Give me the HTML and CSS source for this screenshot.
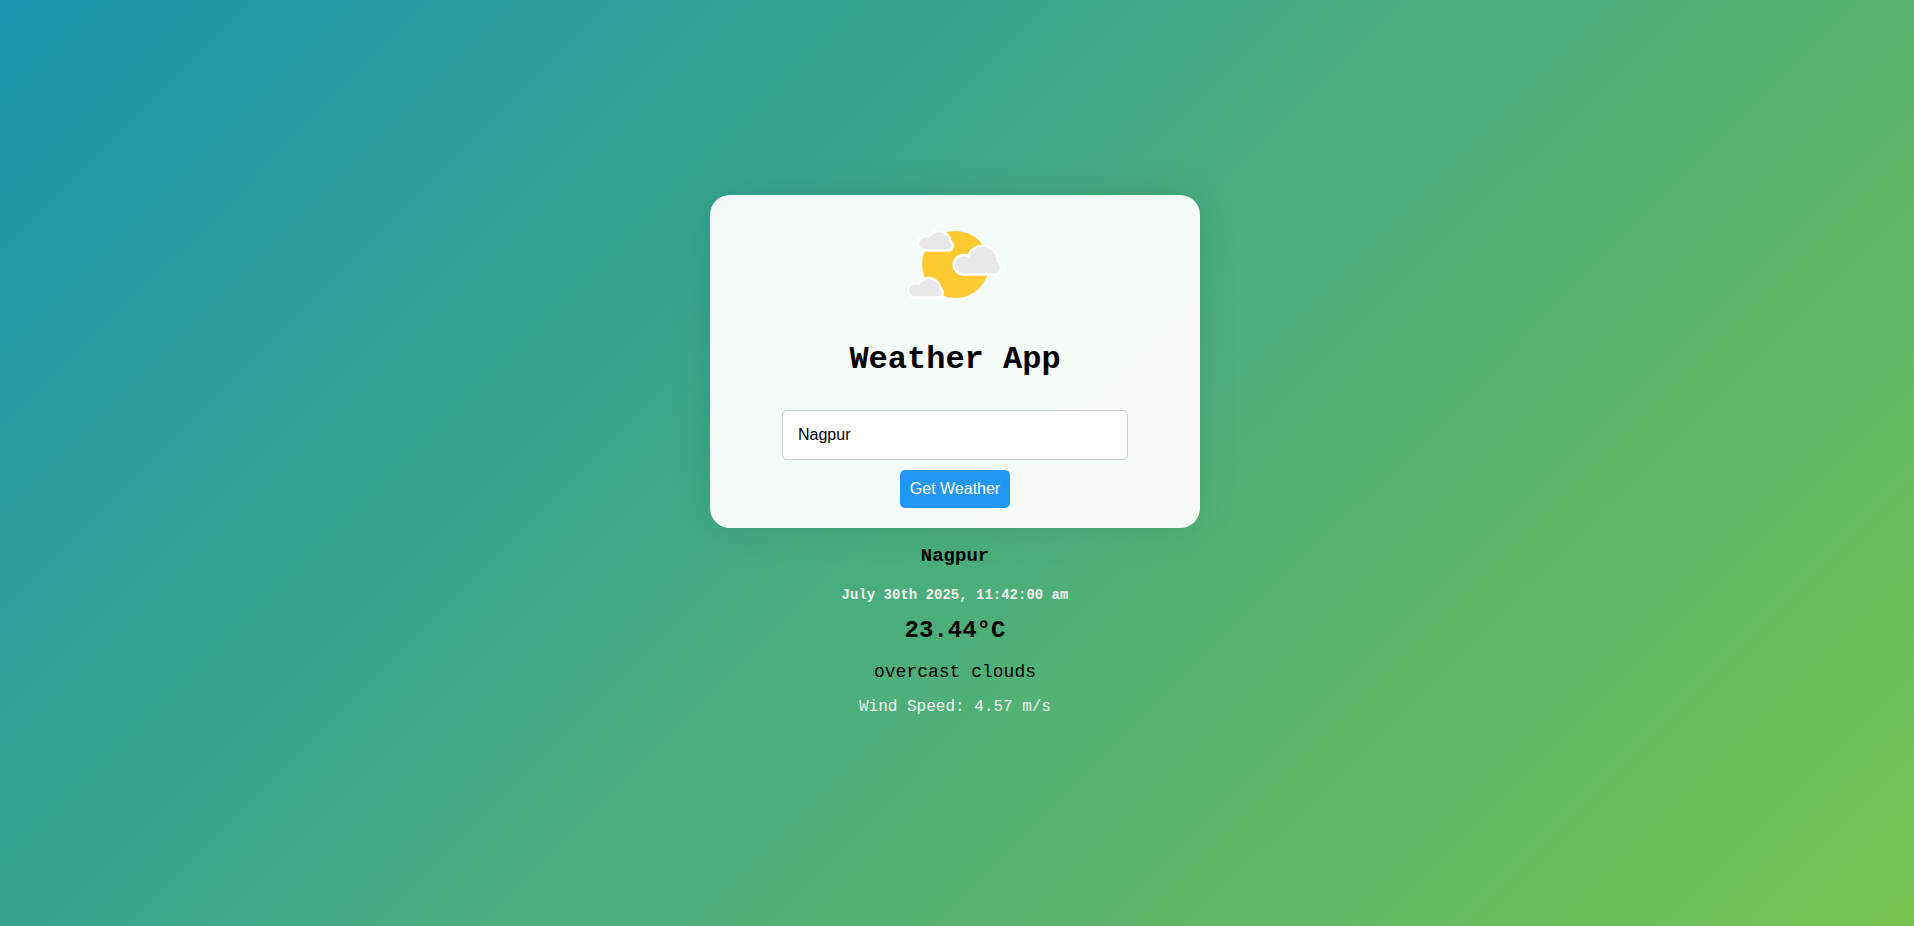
FILE: index.html
```
<!DOCTYPE html>
<html lang="en">
<head>
<meta charset="utf-8">
<title>Weather App</title>
<link rel="stylesheet" href="styles.css">
</head>
<body>
<main class="app">
  <form class="card">
    <svg class="logo" viewBox="0 0 100 100" aria-hidden="true">
      <circle class="sun" cx="50.500" cy="49.500" r="33.500"/>
      <g class="cloud">
        <path d="M20 34.300a5.800 5.800 0 0 1 0-11.600q2.500 0 4.500 .6a10.400 10.400 0 0 1 19.800 3.700a4.200 4.200 0 0 1 .1 7.300z"/>
        <path d="M10 81.300a5.800 5.800 0 0 1 0-11.600q2.500 0 4.500 .6a10.400 10.400 0 0 1 19.800 3.700a4.200 4.200 0 0 1 .1 7.300z"/>
        <path d="M58.500 58.300a8.500 8.500 0 0 1 0-17q3 0 5.500 1.300a14 14 0 0 1 27.500 4.700a6 6 0 0 1 -1 11z"/>
      </g>
    </svg>
    <h1 class="title">Weather App</h1>
    <input class="city-input" type="text" value="Nagpur" aria-label="City">
    <button class="submit" type="button">Get Weather</button>
  </form>
  <section class="result">
    <h2 class="city">Nagpur</h2>
    <p class="date">July 30th 2025, 11:42:00 am</p>
    <p class="temp">23.44°C</p>
    <p class="desc">overcast clouds</p>
    <p class="wind">Wind Speed: 4.57 m/s</p>
  </section>
</main>
</body>
</html>
```
FILE: styles.css
```
* { box-sizing: border-box; }

body {
  margin: 0;
  min-height: 100vh;
  padding: 0 4px 16px 0;
  display: flex;
  align-items: center;
  justify-content: center;
  font-family: "Courier New", "Liberation Mono", monospace;
  color: #000;
  background: linear-gradient(135deg, #1a95ae, #75c44f);
}

.app {
  width: 490px;
  max-width: 100%;
  text-align: center;
}

.card {
  display: flex;
  flex-direction: column;
  align-items: center;
  padding: 20px 72px;
  border-radius: 20px;
  background: rgba(255, 255, 255, 0.95);
  box-shadow: 0 0 40px rgba(0, 0, 0, 0.1);
}

.logo { width: 100px; height: 100px; }
.sun { fill: #ffc930; }
.cloud path {
  fill: #e8e8e8;
  stroke: #fff;
  stroke-width: 5px;
  paint-order: stroke;
  stroke-linejoin: round;
}

.title {
  margin: 25px 0 31px;
  font-size: 32px;
  line-height: 39px;
}

.city-input {
  width: 100%;
  height: 50px;
  margin-bottom: 10px;
  padding: 0 15px;
  border: 1px solid #ccc;
  border-radius: 5px;
  background: #fff;
  font: 16px Arial, "Liberation Sans", sans-serif;
}

.submit {
  padding: 10px;
  border: 0;
  border-radius: 5px;
  background: #2196f3;
  color: #fff;
  font: 16px/18px Arial, "Liberation Sans", sans-serif;
}

.city {
  margin: 16px 0;
  font-size: 19px;
  line-height: 24px;
}

.date {
  margin: 0;
  color: #eee;
  font-size: 14px;
  font-weight: 700;
  line-height: 22px;
}

.temp {
  margin: 10px 0 16px;
  font-size: 24px;
  font-weight: 700;
  line-height: 30px;
}

.desc {
  margin: 16px 0;
  font-size: 18px;
  line-height: 20px;
}

.wind {
  margin: 16px 0 0;
  color: #eee;
  font-size: 16px;
  line-height: 18px;
}
```
